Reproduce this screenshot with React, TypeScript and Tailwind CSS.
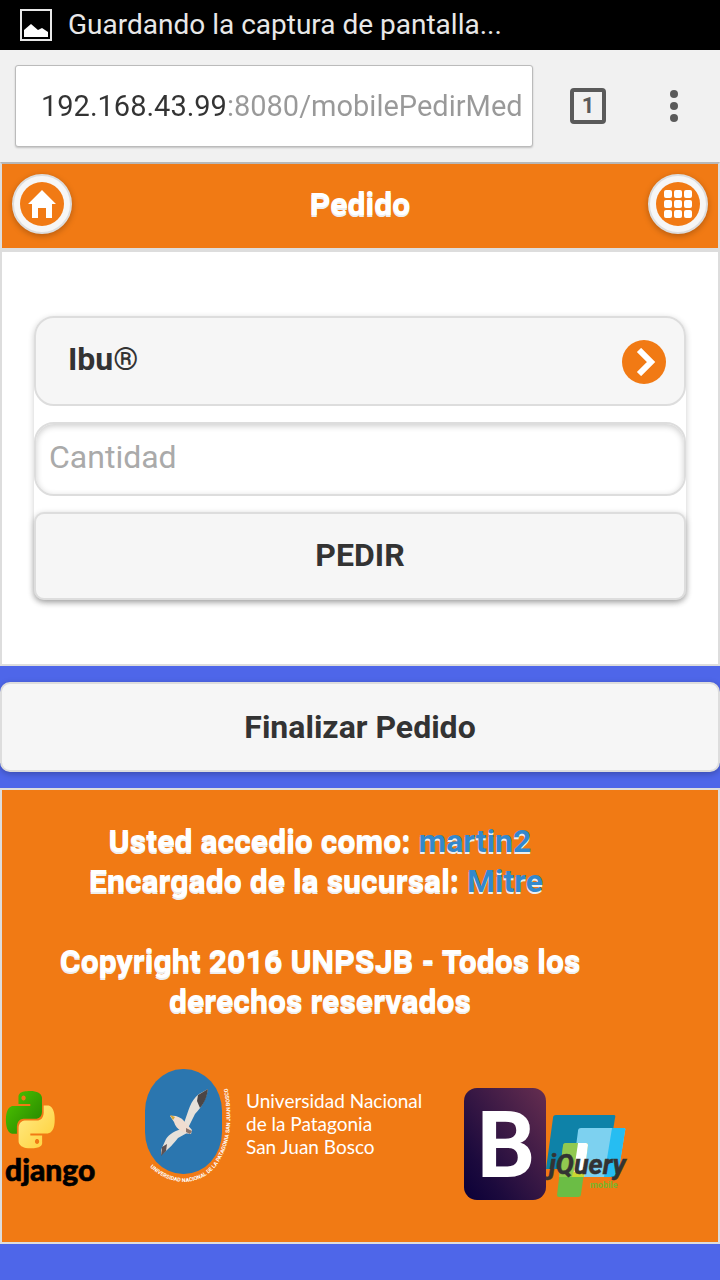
import React from "react";

function StatusBar() {
  return (
    <div className="flex h-[50px] items-center gap-4 bg-black pl-5 text-[#e8e8e8]">
      <svg className="h-8 w-8 shrink-0" viewBox="0 0 32 32" aria-hidden="true">
        <rect x="1" y="1" width="30" height="30" fill="none" stroke="#e8e8e8" strokeWidth="2" />
        <path d="M4 28v-7l7-6 7 6 4-2 6 4v5z" fill="#fff" />
      </svg>
      <span className="text-[28px] leading-9">Guardando la captura de pantalla...</span>
    </div>
  );
}

function BrowserBar() {
  return (
    <div className="flex h-28 items-center bg-[#f1f1f1] pl-[15px]">
      <input
        aria-label="Dirección"
        defaultValue="192.168.43.99:8080/mobilePedirMed"
        className="h-[82px] min-w-0 flex-1 rounded-[3px] border border-[#bbb] bg-white pl-[25px] pr-1 text-[29px] text-transparent shadow-[0_1px_2px_rgba(0,0,0,0.2)] [background:linear-gradient(90deg,#333_211px,#999_211px)_text,#fff]"
      />
      <button
        aria-label="Pestañas"
        className="ml-[37px] flex h-9 w-9 items-center justify-center rounded-[4px] border-4 border-[#5a5a5a] text-[22px] font-bold leading-none text-[#5a5a5a]"
      >
        1
      </button>
      <button aria-label="Menú" className="ml-12 mr-[26px] flex w-10 flex-col items-center gap-1">
        <span className="h-2 w-2 rounded-full bg-[#5a5a5a]" />
        <span className="h-2 w-2 rounded-full bg-[#5a5a5a]" />
        <span className="h-2 w-2 rounded-full bg-[#5a5a5a]" />
      </button>
    </div>
  );
}

function RoundLink({ label, children }: { label: string; children: React.ReactNode }) {
  return (
    <a
      href="#"
      aria-label={label}
      className="flex h-[60px] w-[60px] items-center justify-center rounded-full border-2 border-[#ddd] bg-[#f6f6f6] shadow-[0_2px_6px_rgba(0,0,0,0.25)]"
    >
      <span className="flex h-11 w-11 items-center justify-center rounded-full bg-[#f17a14]">{children}</span>
    </a>
  );
}

function PageHeader() {
  return (
    <header className="flex h-[88px] items-center justify-between border-2 border-[#ddd] border-t-[#b8b8b8] bg-[#f17a14] px-[10px] pb-1">
      <RoundLink label="Inicio">
        <svg className="h-7 w-7" viewBox="0 0 28 28" fill="#fff" aria-hidden="true">
          <path d="M14 0 0 14h4v14h6V18h8v10h6V14h4z" />
        </svg>
      </RoundLink>
      <h1 className="text-[32px] font-extrabold leading-10 text-white [text-shadow:0_2px_0_#eee]">Pedido</h1>
      <RoundLink label="Menú principal">
        <svg className="h-7 w-7" viewBox="0 0 28 28" fill="#fff" aria-hidden="true">
          {[0, 10, 20].map((y) =>
            [0, 10, 20].map((x) => <rect key={`${x}-${y}`} x={x} y={y} width="8" height="8" rx="2" />)
          )}
        </svg>
      </RoundLink>
    </header>
  );
}

function OrderForm() {
  return (
    <main className="border-2 border-[#ddd] bg-white px-8 py-16">
      <form className="flex flex-col gap-4 rounded-b-[10px] rounded-t-[20px] shadow-[0_2px_6px_rgba(0,0,0,0.2)]">
        <div className="relative">
          <select
            aria-label="Medicamento"
            className="block h-[90px] w-full appearance-none rounded-[20px] border-2 border-[#ddd] bg-[#f6f6f6] pb-1 pl-8 pr-20 text-[32px] font-bold text-[#333]"
          >
            <option>Ibu®</option>
          </select>
          <span className="pointer-events-none absolute right-5 top-6 flex h-11 w-11 items-center justify-center rounded-full bg-[#f17a14]">
            <svg className="h-7 w-7" viewBox="0 0 28 28" fill="none" aria-hidden="true">
              <path d="M9 2l12 12L9 26" stroke="#fff" strokeWidth="6" />
            </svg>
          </span>
        </div>
        <input
          aria-label="Cantidad"
          placeholder="Cantidad"
          className="block h-[74px] w-full rounded-[20px] border-2 border-[#ddd] bg-white px-[13px] pb-1 text-[32px] text-[#333] shadow-[inset_0_2px_6px_rgba(0,0,0,0.2)] placeholder:text-[#aaa]"
        />
        <button
          type="button"
          className="h-[88px] rounded-[10px] border-2 border-[#ddd] bg-[#f6f6f6] pb-0.5 text-[32px] font-bold text-[#333] shadow-[0_2px_6px_rgba(0,0,0,0.25)]"
        >
          PEDIR
        </button>
      </form>
    </main>
  );
}

function DjangoLogo() {
  return (
    <svg className="h-28 w-24 shrink-0" viewBox="0 0 96 112" role="img" aria-label="django">
      <defs>
        <linearGradient id="snakeGreen" x1="0" y1="0" x2="1" y2="1">
          <stop offset="0" stopColor="#4fc800" />
          <stop offset="1" stopColor="#238000" />
        </linearGradient>
        <linearGradient id="snakeYellow" x1="0" y1="0" x2="1" y2="1">
          <stop offset="0" stopColor="#ffec8a" />
          <stop offset="1" stopColor="#ffcf35" />
        </linearGradient>
      </defs>
      <g transform="translate(2 3) scale(2.02 2.39)">
        <path
          fill="url(#snakeGreen)"
          d="M14.25.18l.9.2.73.26.59.3.45.32.34.34.25.34.16.33.1.3.04.26.02.2-.01.13V8.5l-.05.63-.13.55-.21.46-.26.38-.3.31-.33.25-.35.19-.35.14-.33.1-.3.07-.26.04-.21.02H8.77l-.69.05-.59.14-.5.22-.41.27-.33.32-.27.35-.2.36-.15.37-.1.35-.07.32-.04.27-.02.21v3.06H3.17l-.21-.03-.28-.07-.32-.12-.35-.18-.36-.26-.36-.36-.35-.46-.32-.59-.28-.73-.21-.88-.14-1.05-.05-1.23.06-1.22.16-1.04.24-.87.32-.71.36-.57.4-.44.42-.33.42-.24.4-.16.36-.1.32-.05.24-.01h.16l.06.01h8.16v-.83H6.18l-.01-2.75-.02-.37.05-.34.11-.31.17-.28.25-.26.31-.23.38-.2.44-.18.51-.15.58-.12.64-.1.71-.06.77-.04.84-.02 1.27.05zm-6.3 1.98l-.23.33-.08.41.08.41.23.34.33.22.41.09.41-.09.33-.22.23-.34.08-.41-.08-.41-.23-.33-.33-.22-.41-.09-.41.09z"
        />
        <path
          fill="url(#snakeYellow)"
          d="M21.1 6.11l.28.06.32.12.35.18.36.27.36.35.35.47.32.59.28.73.21.88.14 1.04.05 1.23-.06 1.23-.16 1.04-.24.86-.32.71-.36.57-.4.45-.42.33-.42.24-.4.16-.36.09-.32.05-.24.02-.16-.01h-8.22v.82h5.84l.01 2.76.02.36-.05.34-.11.31-.17.29-.25.25-.31.24-.38.2-.44.17-.51.15-.58.13-.64.09-.71.07-.77.04-.84.01-1.27-.04-1.07-.14-.9-.2-.73-.25-.59-.3-.45-.33-.34-.34-.25-.34-.16-.33-.1-.3-.04-.25-.02-.2.01-.13v-5.34l.05-.64.13-.54.21-.46.26-.38.3-.32.33-.24.35-.2.35-.14.33-.1.3-.06.26-.04.21-.02.13-.01h5.84l.69-.05.59-.14.5-.21.41-.28.33-.32.27-.35.2-.36.15-.36.1-.35.07-.32.04-.28.02-.21V6.07h2.09l.14.01zm-6.47 14.25l-.23.33-.08.41.08.41.23.33.33.23.41.08.41-.08.33-.23.23-.33.08-.41-.08-.41-.23-.33-.33-.23-.41-.08-.41.08z"
        />
      </g>
      <text x="1" y="93" fontSize="30" fontWeight="900" fontFamily="Lato, sans-serif" fill="#000" stroke="#000" strokeWidth="0.6">
        django
      </text>
    </svg>
  );
}

function UniversityLogo() {
  return (
    <svg className="ml-10 h-[132px] w-24 shrink-0" viewBox="0 0 96 132" role="img" aria-label="UNPSJB">
      <defs>
        <path id="sealRing" d="M10 99C32 120 60 118 76 98C90 79 94 52 87 17" />
      </defs>
      <rect x="5" y="1" width="77" height="105" rx="38" ry="42" fill="#2b76af" />
      <path d="M44 55C49 42 50 33 59 26L68 21C66 31 62 39 55 46L48 60z" fill="#e6e1da" />
      <path d="M68 21L58 27 57 33 60 40C65 34 67 28 68 21z" fill="#4b4545" />
      <path d="M43 61C36 62 29 66 26 71L21 82 21 87C29 81 34 75 38 70L47 65z" fill="#e6e1da" />
      <path d="M22 79L27 76 26 83 21 88z" fill="#5d5152" />
      <path d="M30 48C35 47 41 49 44 53L52 62 51 66C45 66 36 62 34 54z" fill="#f0ddd0" />
      <path d="M30 47l5 2-2 3z" fill="#d7a632" />
      <path d="M46 60l6 3-2 3-4-2z" fill="#8b746a" />
      <text fontSize="5.4" fontWeight="700" fontFamily="Roboto, sans-serif" fill="#fff">
        <textPath href="#sealRing">UNIVERSIDAD NACIONAL DE LA PATAGONIA SAN JUAN BOSCO</textPath>
      </text>
    </svg>
  );
}

function BootstrapLogo() {
  return (
    <svg className="h-28 w-[82px] shrink-0" viewBox="0 0 82 112" role="img" aria-label="Bootstrap">
      <defs>
        <linearGradient id="bootPurple" x1="0" y1="1" x2="1" y2="0">
          <stop offset="0" stopColor="#0b0038" />
          <stop offset="0.25" stopColor="#1c0a3d" />
          <stop offset="1" stopColor="#662e50" />
        </linearGradient>
      </defs>
      <rect width="82" height="112" rx="13" fill="url(#bootPurple)" />
      <text x="42" y="89" textAnchor="middle" fontSize="92" fontWeight="700" fontFamily="Roboto, sans-serif" fill="#fff">
        B
      </text>
    </svg>
  );
}

function JqueryMobileLogo() {
  return (
    <svg className="h-[88px] w-[84px] shrink-0" viewBox="0 0 84 88" role="img" aria-label="jQuery mobile">
      <path d="M10 3h58q2 0 1 3l-8 49q0 2-3 2H0L7 6q0-3 3-3z" fill="#0e82a8" />
      <path d="M35 16h43q2 0 1 3l-7 44q0 2-3 2H26L32 19q0-3 3-3z" fill="#7dd1f0" />
      <path d="M66 16h12q2 0 1 3l-7 44q0 2-3 2H58z" fill="#26bdf2" />
      <path d="M20 31h20q2 0 2 2l-7 49q0 3-3 3H13q-2 0-2-2L17 34q0-3 3-3z" fill="#6bbd45" />
      <path d="M20 31h12l-5 34H13L17 34q0-3 3-3z" fill="#91c950" />
      <path d="M32 31h8q2 0 2 2l-4 32H27z" fill="#fff" />
      <path d="M27 60h12l-1 5H26z" fill="#c8d832" />
      <text x="3" y="62" fontSize="27" fontWeight="700" fontStyle="italic" fontFamily="Roboto, sans-serif" fill="#333" stroke="#333" strokeWidth="0.5">
        jQuery
      </text>
      <text x="44" y="76" fontSize="9" fontWeight="700" fontFamily="Roboto, sans-serif" fill="#7bb52c">
        mobile
      </text>
    </svg>
  );
}

function PageFooter() {
  return (
    <footer className="border-2 border-[#ddd] bg-[#f17a14] pb-[42px] pt-[31px]">
      <div className="pl-1 pr-[84px] text-center text-[32px] font-extrabold leading-10 text-white [text-shadow:0_2px_0_#eee]">
        <p>
          Usted accedio como:{" "}
          <a href="#" className="font-bold text-[#3388cc]">
            martin2
          </a>
        </p>
        <p>
          Encargado de la sucursal:{" "}
          <a href="#" className="mr-2 font-bold text-[#3388cc]">
            Mitre
          </a>
        </p>
        <p className="px-10 pt-10">Copyright 2016 UNPSJB - Todos los derechos reservados</p>
      </div>
      <div className="mt-[47px] flex items-end pl-[2px]">
        <DjangoLogo />
        <UniversityLogo />
        <p className="w-[228px] shrink-0 pb-[42px] pl-[10px] font-['Lato',sans-serif] text-[19px] leading-[23px] text-white">
          Universidad Nacional
          <br />
          de la Patagonia
          <br />
          San Juan Bosco
        </p>
        <BootstrapLogo />
        <JqueryMobileLogo />
      </div>
    </footer>
  );
}

export default function App() {
  return (
    <div className="min-h-screen bg-[#4e66e9] font-['Roboto',sans-serif]">
      <StatusBar />
      <BrowserBar />
      <PageHeader />
      <OrderForm />
      <div className="py-4">
        <button
          type="button"
          className="block h-[90px] w-full rounded-[10px] border-2 border-[#ddd] bg-[#f6f6f6] text-[32px] font-bold text-[#333] shadow-[0_2px_6px_rgba(0,0,0,0.25)]"
        >
          Finalizar Pedido
        </button>
      </div>
      <PageFooter />
    </div>
  );
}
